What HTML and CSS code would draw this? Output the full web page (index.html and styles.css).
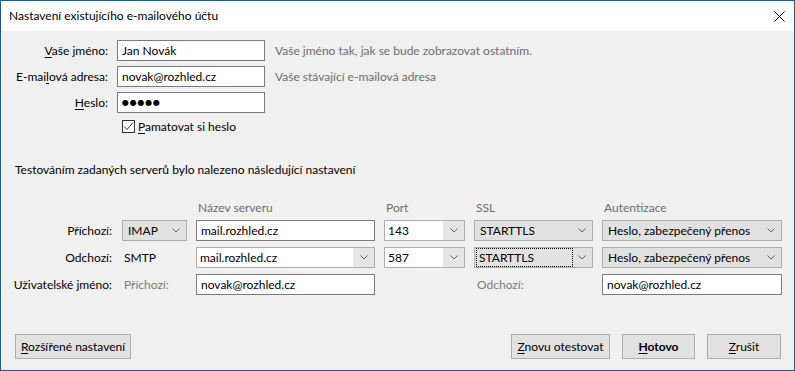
FILE: index.html
```html
<!DOCTYPE html>
<html lang="cs">
<head>
  <meta charset="UTF-8" />
  <title>Nastavení existujícího e-mailového účtu</title>
  <link rel="stylesheet" href="styles.css">
</head>
<body>

  <div class="window">
    <div class="titlebar">
      <span class="title">Nastavení existujícího e-mailového účtu</span>
      <svg class="close" width="11" height="11" viewBox="0 0 11 11">
        <path d="M0.5 0.5L10.5 10.5M10.5 0.5L0.5 10.5" stroke="#000" stroke-width="1" />
      </svg>
    </div>

    <div class="content">
      <div class="identity">
        <label class="lbl"><u>V</u>aše jméno:</label>
        <div class="input">Jan Novák</div>
        <span class="hint">Vaše jméno tak, jak se bude zobrazovat ostatním.</span>

        <label class="lbl">E-mai<u>l</u>ová adresa:</label>
        <div class="input">novak@rozhled.cz</div>
        <span class="hint">Vaše stávající e-mailová adresa</span>

        <label class="lbl"><u>H</u>eslo:</label>
        <div class="input password">●●●●●</div>
        <span></span>

        <span></span>
        <label class="check">
          <span class="box">
            <svg width="11" height="11" viewBox="0 0 11 11">
              <path d="M1 5.5L4 8.5L10 1.5" fill="none" stroke="#333" stroke-width="1" />
            </svg>
          </span>
          <span><u>P</u>amatovat si heslo</span>
        </label>
      </div>

      <p class="found">Testováním zadaných serverů bylo nalezeno následující nastavení</p>

      <div class="servers">
        <span></span>
        <span></span>
        <span class="col-head">Název serveru</span>
        <span class="col-head">Port</span>
        <span class="col-head">SSL</span>
        <span class="col-head">Autentizace</span>

        <span class="lbl">Příchozí:</span>
        <div class="select"><span class="val">IMAP</span><span class="arrow"><svg width="8" height="5" viewBox="0 0 8 5"><path d="M0.5 0.5L4 4L7.5 0.5" fill="none" stroke="#606060" /></svg></span></div>
        <div class="input">mail.rozhled.cz</div>
        <div class="combo"><span class="val">143</span><span class="btn"><svg width="8" height="5" viewBox="0 0 8 5"><path d="M0.5 0.5L4 4L7.5 0.5" fill="none" stroke="#606060" /></svg></span></div>
        <div class="select"><span class="val">STARTTLS</span><span class="arrow"><svg width="8" height="5" viewBox="0 0 8 5"><path d="M0.5 0.5L4 4L7.5 0.5" fill="none" stroke="#606060" /></svg></span></div>
        <div class="select"><span class="val">Heslo, zabezpečený přenos</span><span class="arrow"><svg width="8" height="5" viewBox="0 0 8 5"><path d="M0.5 0.5L4 4L7.5 0.5" fill="none" stroke="#606060" /></svg></span></div>

        <span class="lbl">Odchozí:</span>
        <span class="plain">SMTP</span>
        <div class="combo"><span class="val">mail.rozhled.cz</span><span class="btn"><svg width="8" height="5" viewBox="0 0 8 5"><path d="M0.5 0.5L4 4L7.5 0.5" fill="none" stroke="#606060" /></svg></span></div>
        <div class="combo"><span class="val">587</span><span class="btn"><svg width="8" height="5" viewBox="0 0 8 5"><path d="M0.5 0.5L4 4L7.5 0.5" fill="none" stroke="#606060" /></svg></span></div>
        <div class="select focused"><span class="val">STARTTLS</span><span class="arrow"><svg width="8" height="5" viewBox="0 0 8 5"><path d="M0.5 0.5L4 4L7.5 0.5" fill="none" stroke="#606060" /></svg></span></div>
        <div class="select"><span class="val">Heslo, zabezpečený přenos</span><span class="arrow"><svg width="8" height="5" viewBox="0 0 8 5"><path d="M0.5 0.5L4 4L7.5 0.5" fill="none" stroke="#606060" /></svg></span></div>

        <span class="lbl">Uživatelské jméno:</span>
        <span class="plain muted">Příchozí:</span>
        <div class="input">novak@rozhled.cz</div>
        <span></span>
        <span class="plain muted sub">Odchozí:</span>
        <div class="input">novak@rozhled.cz</div>
      </div>

      <div class="footer">
        <button class="button wide"><u>R</u>ozšířené nastavení</button>
        <div class="footer-right">
          <button class="button retest"><u>Z</u>novu otestovat</button>
          <button class="button done"><u>H</u>otovo</button>
          <button class="button cancel"><u>Z</u>rušit</button>
        </div>
      </div>
    </div>
  </div>

</body>
</html>
```

FILE: styles.css
```css
* {
  box-sizing: border-box;
  margin: 0;
  padding: 0;
}

body {
  font-family: 'Lato', 'Noto Sans', sans-serif;
  font-size: 12px;
  color: #000;
  background: #f0f0f0;
}

.window {
  width: 795px;
  height: 371px;
  border: 1px solid #1d5a86;
  background: #f0f0f0;
  display: flex;
  flex-direction: column;
}

.titlebar {
  height: 30px;
  background: #fff;
  display: flex;
  align-items: center;
  justify-content: space-between;
  padding: 0 9px 0 8px;
}

.title {
  line-height: 16px;
}

.close {
  margin-top: 1px;
}

.content {
  flex: 1;
  display: flex;
  flex-direction: column;
  padding-top: 9px;
}

u {
  text-decoration: underline;
  text-underline-offset: 2px;
}

/* identity block */

.identity {
  display: grid;
  grid-template-columns: 107px 148px auto;
  column-gap: 9px;
  row-gap: 5px;
  align-items: center;
}

.identity .hint {
  margin-left: 1px;
}

.lbl {
  text-align: right;
  white-space: nowrap;
}

.hint {
  color: #6d6d6d;
}

.input {
  height: 21px;
  background: #fff;
  border: 1px solid #7a7a7a;
  padding: 0 4px;
  display: flex;
  align-items: center;
  white-space: nowrap;
}

.password {
  font-family: 'DejaVu Sans', sans-serif;
  font-size: 8px;
  letter-spacing: 0.8px;
}

.check {
  display: flex;
  align-items: center;
  gap: 3px;
  margin-left: 5px;
  height: 16px;
}

.box {
  width: 13px;
  height: 13px;
  border: 1px solid #333;
  background: #fff;
  display: flex;
  align-items: center;
  justify-content: center;
}

.found {
  margin: 28px 0 0 14px;
  line-height: 16px;
}

/* server table */

.servers {
  margin-top: 20px;
  display: grid;
  grid-template-columns: 112px 65px 179px 81px 119px 180px;
  grid-template-rows: 16px 21px 21px 21px;
  column-gap: 9px;
  row-gap: 6px;
  align-items: center;
}

.servers .col-head {
  color: #6d6d6d;
  padding-left: 2px;
  margin-bottom: -3px;
}

.servers .lbl {
  padding-right: 1px;
}

.plain {
  padding-left: 2px;
}

.muted {
  color: #7a7a7a;
}

.sub {
  padding-left: 3px;
}

.select {
  height: 21px;
  background: #e1e1e1;
  border: 1px solid #adadad;
  display: flex;
  align-items: center;
  padding-left: 5px;
}

.select .val {
  flex: 1;
  white-space: nowrap;
}

.select .arrow {
  width: 20px;
  display: flex;
  justify-content: center;
}

.select.focused .val {
  align-self: stretch;
  display: flex;
  align-items: center;
  margin: 1px 0 1px -3px;
  padding-left: 2px;
  outline: 1px dotted #000;
  outline-offset: 0;
}

.combo {
  height: 21px;
  background: #fff;
  border: 1px solid #adadad;
  display: flex;
  align-items: stretch;
}

.combo .val {
  flex: 1;
  display: flex;
  align-items: center;
  padding-left: 3px;
  white-space: nowrap;
}

.combo .btn {
  width: 21px;
  background: #e5e5e5;
  display: flex;
  align-items: center;
  justify-content: center;
}

/* buttons */

.footer {
  margin-top: auto;
  display: flex;
  justify-content: space-between;
  padding: 0 13px 11px 14px;
}

.footer-right {
  display: flex;
  gap: 12px;
}

.button {
  height: 25px;
  font: inherit;
  color: #000;
  background: #e1e1e1;
  border: 1px solid #adadad;
  padding: 0;
}

.wide {
  width: 116px;
}

.retest {
  width: 99px;
}

.done {
  width: 73px;
  font-weight: 700;
}

.cancel {
  width: 74px;
}
```
